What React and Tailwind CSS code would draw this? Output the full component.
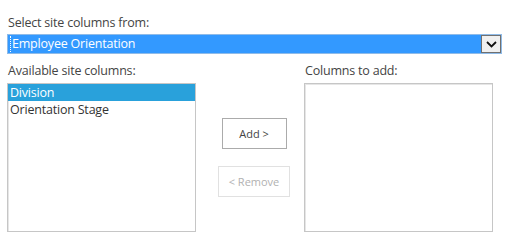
import React from "react";

const font = { fontFamily: '"Open Sans", "Noto Sans", "Liberation Sans", sans-serif' };

export default function App() {
  return (
    <div
      className="w-[517px] h-[240px] bg-white overflow-hidden pt-[14px] pl-[7px] text-[#444] text-[12.5px] leading-[17px] tracking-[-0.2px]"
      style={font}
    >
      <div className="pl-[1px]">Select site columns from:</div>
      <div className="mt-[3px] w-[495px] h-[20px] flex border border-[#8fbbe8] bg-[#3399ff]">
        <div className="flex-1 flex items-center pl-[2px] text-white text-[12.5px] leading-[16px]">
          <span className="border-l border-dotted border-white pl-[1px]">Employee Orientation</span>
        </div>
        <div className="w-[20px] h-full bg-[#f0f0f0] border border-[#707070] flex items-center justify-center">
          <svg width="11" height="7" viewBox="0 0 11 7">
            <path d="M1 1 L5.5 5.5 L10 1" fill="none" stroke="#111" strokeWidth="1.8" />
          </svg>
        </div>
      </div>
      <div className="mt-[8px] flex">
        <div className="w-[189px] flex flex-col">
          <div className="pl-[1px] h-[21px]">Available site columns:</div>
          <div className="h-[149px] border border-[#c6c6c6] shadow-[inset_1px_1px_0_#e6e6e6] bg-white text-[#333] text-[12.5px] leading-[17px]">
            <div className="bg-[#29a1db] text-white pl-[2px]">Division</div>
            <div className="pl-[2px]">Orientation Stage</div>
          </div>
        </div>
        <div className="w-[108px] flex flex-col items-center pt-[56px] pl-[8px]">
          <div className="w-[65px] h-[31px] border border-[#ababab] flex items-center justify-center text-[11px] tracking-normal text-[#444]">
            Add &gt;
          </div>
          <div className="mt-[17px] w-[72px] h-[31px] border border-[#e1e1e1] flex items-center justify-center text-[11px] tracking-normal text-[#b1b1b1]">
            &lt; Remove
          </div>
        </div>
        <div className="w-[189px] flex flex-col">
          <div className="pl-[1px] h-[21px]">Columns to add:</div>
          <div className="h-[149px] border border-[#c6c6c6] shadow-[inset_1px_1px_0_#e6e6e6] bg-white"></div>
        </div>
      </div>
    </div>
  );
}
